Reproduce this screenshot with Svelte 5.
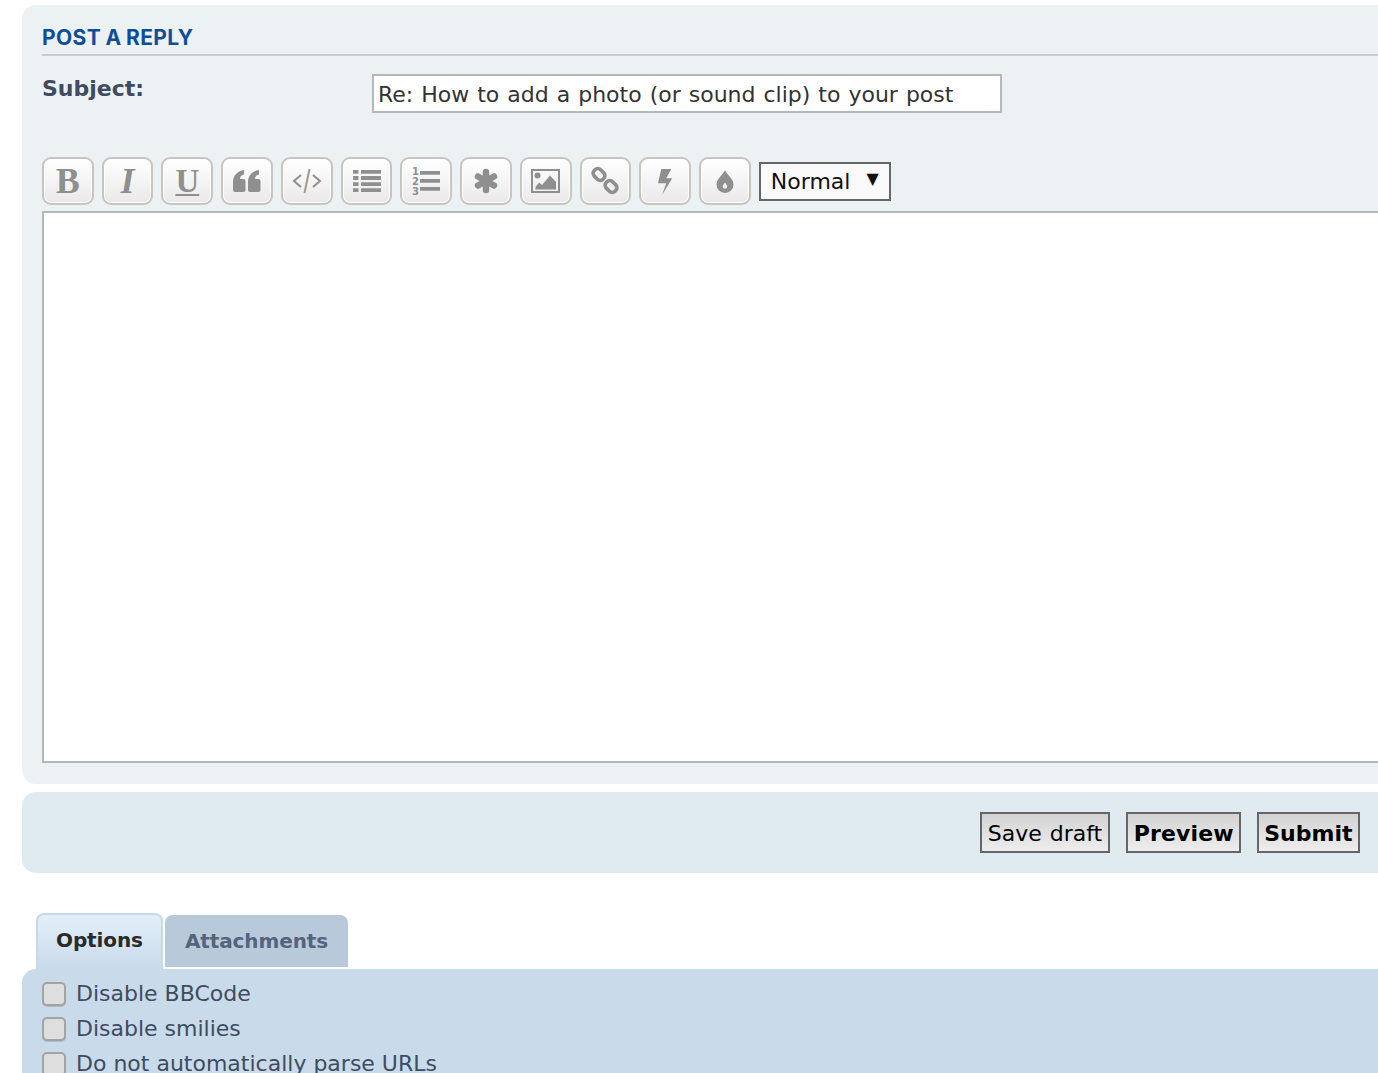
<script>
    const checks = ['Disable BBCode', 'Disable smilies', 'Do not automatically parse URLs'];
</script>

<div class="page">
    <form class="panel post">
        <h3>POST A REPLY</h3>
        <div class="subject">
            <label for="subject">Subject:</label>
            <input id="subject" type="text" value="Re: How to add a photo (or sound clip) to your post" />
        </div>

        <div class="toolbar">
            <button type="button" class="tool"><span class="b">B</span></button>
            <button type="button" class="tool"><span class="i">I</span></button>
            <button type="button" class="tool"><span class="u">U</span></button>
            <button type="button" class="tool">
                <svg width="28" height="22" viewBox="0 0 28 22"><path d="M0 12C0 6 4 1 11 0v4.500C8.500 5 7 6.500 7 9h3.500a2 2 0 0 1 2 2v9a2 2 0 0 1-2 2H2a2 2 0 0 1-2-2zM15 12c0-6 4-11 11-12v4.500C23.500 5 22 6.500 22 9h3.500a2 2 0 0 1 2 2v9a2 2 0 0 1-2 2H17a2 2 0 0 1-2-2z" /></svg>
            </button>
            <button type="button" class="tool">
                <svg width="30" height="26" viewBox="0 0 30 26" fill="none" stroke="#8f8f8f" stroke-width="2"><path d="M9 7l-7 6 7 6M21 7l7 6-7 6" /><path d="M17.500 1l-5 24" stroke="#a39a8e" /></svg>
            </button>
            <button type="button" class="tool">
                <svg width="28" height="22" viewBox="0 0 28 22"><path d="M0 0h5.500v3.800H0zM8 0h20v3.800H8zM0 6.100h5.500v3.800H0zM8 6.100h20v3.800H8zM0 12.200h5.500V16H0zM8 12.200h20V16H8zM0 18.200h5.500V22H0zM8 18.200h20V22H8z" /></svg>
            </button>
            <button type="button" class="tool">
                <svg width="30" height="28" viewBox="0 0 30 28">
                    <text x="1" y="7.500" class="num">1</text>
                    <text x="1" y="18" class="num">2</text>
                    <text x="1" y="28" class="num">3</text>
                    <path d="M9 4h20v3.800H9zM9 12h20v3.800H9zM9 20h20v3.800H9z" />
                </svg>
            </button>
            <button type="button" class="tool">
                <svg width="24" height="24" viewBox="0 0 24 24" fill="none" stroke="#8f8f8f" stroke-width="6.500" stroke-linecap="round"><path d="M12 3v18M4 7.500l16 9M20 7.500l-16 9" /></svg>
            </button>
            <button type="button" class="tool">
                <svg width="29" height="24" viewBox="0 0 29 24"><path fill-rule="evenodd" d="M0 0h29v24H0zM2 2v20h25V2z" /><circle cx="6.500" cy="6.500" r="3" /><path d="M4.500 20.500V18L8 13.500l3 2.500 8-9.500 6 6.500v7.500z" /></svg>
            </button>
            <button type="button" class="tool">
                <svg width="26" height="26" viewBox="0 0 26 26" fill="none" stroke="#8f8f8f" stroke-width="3.600"><rect x="0.800" y="2" width="12.400" height="9" rx="4" transform="rotate(45 7 6.500)" /><rect x="12.800" y="14" width="12.400" height="9" rx="4" transform="rotate(45 19 18.500)" /></svg>
            </button>
            <button type="button" class="tool">
                <svg class="bolt" width="15" height="26" viewBox="0 0 15 26"><path d="M3.300 0h10L8.300 9.300h6L4 26l4.300-11.700H0z" /></svg>
            </button>
            <button type="button" class="tool">
                <svg width="18" height="23" viewBox="0 0 18 23"><path fill-rule="evenodd" d="M9 0c1.500 4.500 8.500 8.500 8.500 14.500a8.500 8.500 0 0 1-17 0C.5 8.500 7.500 4.500 9 0zM9 12.500c-.8 1.300-2.300 2.500-2.300 4a2.300 2.300 0 0 0 4.600 0c0-1.500-1.500-2.700-2.300-4z" /></svg>
            </button>
            <div class="select">Normal<span class="caret">▼</span></div>
        </div>

        <textarea></textarea>
    </form>

    <div class="panel actions">
        <button type="button" class="btn draft">Save draft</button>
        <button type="button" class="btn strong">Preview</button>
        <button type="button" class="btn strong submit">Submit</button>
    </div>

    <div class="tabs">
        <div class="tab active">Options</div>
        <div class="tab">Attachments</div>
    </div>
    <div class="panel options">
        {#each checks as text}
            <div class="check"><span class="box"></span>{text}</div>
        {/each}
    </div>
</div>

<style>
    :global(body) {
        overflow: hidden;
        background: #fff;
    }

    .page {
        box-sizing: border-box;
        width: 1410px;
        height: 1073px;
        padding: 5px 0 0 22px;
        overflow: hidden;
        font-family: "DejaVu Sans", Verdana, sans-serif;
        color: #3f4c60;
    }

    .panel {
        border-radius: 14px;
    }

    .post {
        box-sizing: border-box;
        height: 779px;
        padding: 17px 20px 0;
        background: #ecf1f4;
    }

    h3 {
        margin: 0;
        height: 34px;
        box-sizing: border-box;
        padding-top: 3px;
        border-bottom: 2px solid #c8cccd;
        font-family: Inter, sans-serif;
        font-size: 21px;
        line-height: 26px;
        font-weight: 700;
        letter-spacing: 0.400px;
        word-spacing: -1px;
        color: #0f4d9a;
    }

    .subject {
        display: flex;
        align-items: flex-start;
        padding-top: 18px;
        height: 101px;
        box-sizing: border-box;
    }

    label {
        width: 330px;
        font-size: 22px;
        font-weight: 700;
        line-height: 27px;
        margin-top: 1px;
    }

    input {
        box-sizing: border-box;
        width: 630px;
        height: 39px;
        padding: 2px 4px 0;
        border: 2px solid #b2b8bc;
        background: #fff;
        font: 22px "DejaVu Sans", Verdana, sans-serif;
        word-spacing: 1px;
        color: #333;
    }

    .toolbar {
        display: flex;
        align-items: flex-start;
        gap: 8px;
        height: 54px;
    }

    .tool {
        box-sizing: border-box;
        display: flex;
        align-items: center;
        justify-content: center;
        width: 51.740px;
        height: 48px;
        padding: 0;
        border: 2px solid #c8c5c0;
        border-radius: 9px;
        background: linear-gradient(#fff, #e9e9e9);
        box-shadow: inset 0 0 0 1px #fff;
        color: #8f8f8f;
    }

    .tool svg {
        fill: #8f8f8f;
        overflow: visible;
    }

    .tool svg[fill="none"] {
        fill: none;
    }

    .tool .bolt {
        margin-top: 2px;
    }

    .num {
        font: 700 10px "DejaVu Sans", sans-serif;
    }

    .b, .i, .u {
        font-family: "Liberation Serif", serif;
        font-size: 36px;
        line-height: 36px;
        font-weight: 700;
    }

    .i {
        font-style: italic;
    }

    .u {
        font-size: 33px;
        text-decoration: underline;
        text-decoration-thickness: 2px;
        text-underline-offset: 2px;
    }

    .select {
        box-sizing: border-box;
        display: flex;
        justify-content: space-between;
        width: 132px;
        height: 39px;
        margin-top: 5px;
        padding: 0 10px;
        border: 2px solid #666;
        background: #fafafa;
        font-size: 22px;
        line-height: 36px;
        color: #111;
    }

    .caret {
        font-size: 16px;
        line-height: 30px;
    }

    textarea {
        display: block;
        box-sizing: border-box;
        width: 100%;
        height: 552px;
        border: 2px solid #b2b8bc;
        background: #fff;
        resize: none;
    }

    .actions {
        display: flex;
        justify-content: flex-end;
        gap: 16px;
        box-sizing: border-box;
        height: 81px;
        margin-top: 8px;
        padding: 20px 50px 0 0;
        background: #e0ebf1;
    }

    .btn {
        box-sizing: border-box;
        height: 41px;
        padding: 2px 5px 0 6px;
        border: 2px solid #666;
        background: linear-gradient(#d3d3d3, #ededed);
        font: 22px "DejaVu Sans", Verdana, sans-serif;
        color: #000;
    }

    .draft {
        padding: 2px 5.500px 0;
        word-spacing: 1px;
    }

    .strong {
        font-weight: 700;
        letter-spacing: 0.150px;
    }

    .submit {
        letter-spacing: 0;
        padding: 2px 5.500px 0;
    }

    .tabs {
        display: flex;
        align-items: flex-start;
        gap: 2px;
        height: 56px;
        margin-top: 40px;
        padding-left: 14px;
    }

    .tab {
        box-sizing: border-box;
        height: 52px;
        margin-top: 2px;
        padding: 0 20px;
        border-radius: 8px 8px 0 0;
        background: #b8cad9;
        font-size: 20px;
        font-weight: 700;
        line-height: 52px;
        letter-spacing: -0.100px;
        color: #536480;
    }

    .active {
        height: 56px;
        margin-top: 0;
        border: 2px solid #c4d9ea;
        border-bottom: 0;
        padding: 0 18px;
        background: linear-gradient(#e3f0fb, #c9d9e9);
        line-height: 50px;
        color: #2a2a2a;
    }

    .options {
        height: 200px;
        padding: 7px 20px;
        border-radius: 14px 0 0 0;
        background: #c9daea;
    }

    .check {
        display: flex;
        align-items: center;
        gap: 10px;
        height: 35px;
        font-size: 22px;
    }

    .box {
        box-sizing: border-box;
        width: 24px;
        height: 24px;
        border: 2px solid #a3a3a3;
        border-radius: 5px;
        background: #dedede;
        box-shadow: 0 1px 0 #b0bcc8;
    }
</style>
